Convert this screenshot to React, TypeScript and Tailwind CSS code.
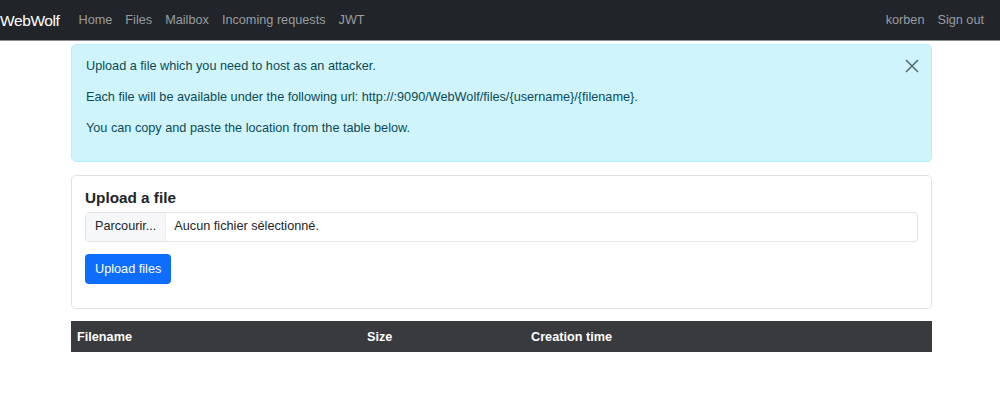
const NAV_LINKS = ["Home", "Files", "Mailbox", "Incoming requests", "JWT"];

export default function App() {
  return (
    <div className="min-h-[398px] bg-white font-['Liberation_Sans',Arial,sans-serif] text-[12.7px] text-[#212529]">
      <nav className="flex h-[41px] items-center border-b border-[#8a8d90] bg-[#212529] pr-4 pt-[2px]">
        <span className="text-[15.5px] tracking-[-0.4px] text-white">WebWolf</span>
        <ul className="ml-[19px] flex gap-[13px] text-[12.7px] text-[#9a9c9f]">
          {NAV_LINKS.map((link) => (
            <li key={link}>{link}</li>
          ))}
        </ul>
        <div className="ml-auto flex gap-[13px] text-[12.7px] text-[#9a9c9f]">
          <span>korben</span>
          <span>Sign out</span>
        </div>
      </nav>

      <main className="mx-[71px] w-[861px]">
        <div className="relative mt-[3px] rounded-[5px] border border-[#b6effb] bg-[#cff4fc] px-[14px] pb-[9px] pt-[13px] text-[#0a4b57]">
          <p className="mb-[15px] leading-[16px]">Upload a file which you need to host as an attacker.</p>
          <p className="mb-[15px] leading-[16px]">
            Each file will be available under the following url: http://:9090/WebWolf/files/{"{username}"}/{"{filename}"}.
          </p>
          <p className="mb-[16px] leading-[16px]">You can copy and paste the location from the table below.</p>
          <button className="absolute right-[12px] top-[14px] text-[#5a6b70]" aria-label="Close">
            <svg width="14" height="14" viewBox="0 0 14 14" fill="none" stroke="currentColor" strokeWidth="1.6">
              <path d="M1 1l12 12M13 1L1 13" />
            </svg>
          </button>
        </div>

        <section className="mt-[13px] rounded-[5px] border border-[#dee2e6] px-[13px] pb-[24px] pt-[12px]">
          <h2 className="text-[15.3px] font-bold leading-[20px]">Upload a file</h2>
          <div className="mt-[4px] flex h-[30px] items-stretch overflow-hidden rounded-[4px] border border-[#e3e5e8]">
            <span className="flex items-center border-r border-[#e9ecef] bg-[#f6f7f8] px-[9px]">Parcourir...</span>
            <span className="flex items-center pl-[8px]">Aucun fichier sélectionné.</span>
          </div>
          <button className="mt-[12px] h-[30px] rounded-[4px] bg-[#0d6efd] px-[10px] pt-px text-[12.7px] text-white">
            Upload files
          </button>
        </section>

        <table className="mt-[12px] w-full border-collapse">
          <thead>
            <tr className="h-[31px] bg-[#383a3d] text-left text-[12.7px] font-bold text-white">
              <th className="w-[290px] pl-[6px] pt-[3px]">Filename</th>
              <th className="w-[164px] pl-[6px] pt-[3px]">Size</th>
              <th className="pl-[6px] pt-[3px]">Creation time</th>
            </tr>
          </thead>
        </table>
      </main>
    </div>
  );
}
